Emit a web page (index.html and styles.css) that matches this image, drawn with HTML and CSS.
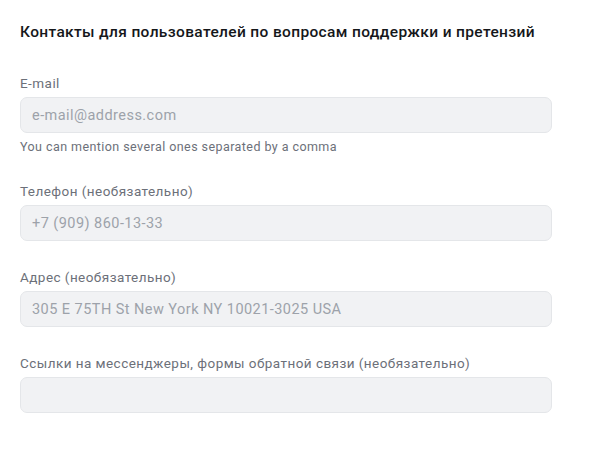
FILE: index.html
```html
<!DOCTYPE html>
<html lang="ru">
<head>
  <meta charset="utf-8" />
  <meta name="viewport" content="width=device-width, initial-scale=1" />
  <title>Контакты</title>
  <link rel="stylesheet" href="styles.css">
</head>
<body>
  <div class="section">
    <h2 class="section-title">Контакты для пользователей по вопросам поддержки и претензий</h2>

    <div class="field">
      <label for="email">E-mail</label>
      <input id="email" type="text" placeholder="e-mail@address.com" />
      <p class="hint">You can mention several ones separated by a comma</p>
    </div>

    <div class="field">
      <label for="phone">Телефон (необязательно)</label>
      <input id="phone" type="text" placeholder="+7 (909) 860-13-33" />
    </div>

    <div class="field">
      <label for="address">Адрес (необязательно)</label>
      <input id="address" type="text" placeholder="305 E 75TH St New York NY 10021-3025 USA" />
    </div>

    <div class="field">
      <label for="links">Ссылки на мессенджеры, формы обратной связи (необязательно)</label>
      <input id="links" type="text" />
    </div>
  </div>
</body>
</html>
```

FILE: styles.css
```css
body {
  font-family: Roboto, "Liberation Sans", Arial, sans-serif;
  background: #ffffff;
  margin: 0;
  padding: 22px 20px;
  color: #1d2024;
}
.section {
  width: 532px;
  display: flex;
  flex-direction: column;
  gap: 28px;
}
.section-title {
  margin: 0 0 5px;
  font-size: 15.5px;
  line-height: 20px;
  font-weight: 500;
  letter-spacing: 0.35px;
  color: #15171a;
  white-space: nowrap;
}
.field {
  display: flex;
  flex-direction: column;
}
label {
  font-size: 13.5px;
  line-height: 16px;
  letter-spacing: 0.45px;
  color: #6c7079;
  margin-bottom: 6px;
}
input[type="text"] {
  box-sizing: border-box;
  width: 100%;
  height: 36px;
  padding: 0 11px;
  font-family: inherit;
  font-size: 14.5px;
  letter-spacing: 0.45px;
  color: #1d2024;
  background: #f1f2f4;
  border: 1px solid #e4e6e9;
  border-radius: 7px;
  outline: none;
}
input::placeholder {
  color: #9da2aa;
}
.hint {
  margin: 6px 0 0;
  font-size: 12.5px;
  line-height: 16px;
  letter-spacing: 0.43px;
  color: #6c7079;
}
```
